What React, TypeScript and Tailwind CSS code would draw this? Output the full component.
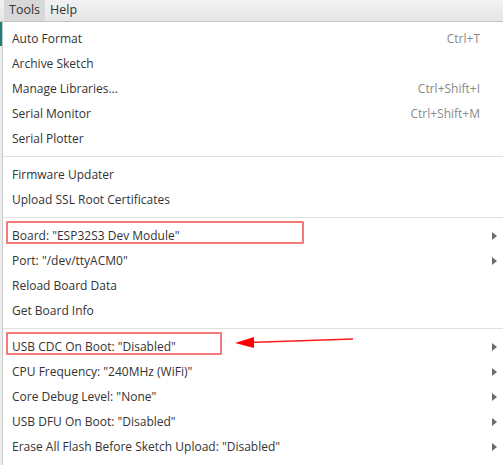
import React from 'react';

type Item = { label: string; shortcut?: string; sub?: boolean; box?: number };

const groups: Item[][] = [
  [
    { label: 'Auto Format', shortcut: 'Ctrl+T' },
    { label: 'Archive Sketch' },
    { label: 'Manage Libraries...', shortcut: 'Ctrl+Shift+I' },
    { label: 'Serial Monitor', shortcut: 'Ctrl+Shift+M' },
    { label: 'Serial Plotter' },
  ],
  [{ label: 'Firmware Updater' }, { label: 'Upload SSL Root Certificates' }],
  [
    { label: 'Board: "ESP32S3 Dev Module"', sub: true, box: 298 },
    { label: 'Port: "/dev/ttyACM0"', sub: true },
    { label: 'Reload Board Data' },
    { label: 'Get Board Info' },
  ],
  [
    { label: 'USB CDC On Boot: "Disabled"', sub: true, box: 216 },
    { label: 'CPU Frequency: "240MHz (WiFi)"', sub: true },
    { label: 'Core Debug Level: "None"', sub: true },
    { label: 'USB DFU On Boot: "Disabled"', sub: true },
    { label: 'Erase All Flash Before Sketch Upload: "Disabled"', sub: true },
  ],
];

const Row = ({ item }: { item: Item }) => (
  <div className="relative flex h-[25px] items-center pl-[9px] pr-[23px]">
    <span className="text-[#333333]">{item.label}</span>
    {item.shortcut && <span className="ml-auto text-[#8a8a8a]">{item.shortcut}</span>}
    {item.sub && (
      <svg className="absolute right-[6px] top-[9px]" width="5" height="8" viewBox="0 0 5 8">
        <path d="M0 0 L5 4 L0 8 Z" fill="#6b6b6b" />
      </svg>
    )}
    {item.box && (
      <div
        className="absolute left-[3px] top-[-2px] h-[23px] rounded-[1px] border-2 border-[#f27a7a]"
        style={{ width: item.box }}
      />
    )}
  </div>
);

export default function App() {
  return (
    <div
      className="relative h-[465px] w-[503px] overflow-hidden bg-white text-[12px]"
      style={{ fontFamily: '"Open Sans", "Noto Sans", sans-serif' }}
    >
      <div className="flex h-[22px] items-stretch border-b border-[#c4c4c4] bg-gradient-to-b from-[#f2f2f2] to-[#e6e6e6] text-[12.5px] text-[#333333]">
        <div className="ml-[4px] flex items-center bg-[#d8d8d8] px-[5px]">Tools</div>
        <div className="flex items-center px-[5px]">Help</div>
      </div>
      <div className="flex h-[443px]">
        <div className="w-[3px] border-r border-[#c8c8c8] bg-[#ececec]">
          <div className="h-[24px] bg-[#1b7f7a]" />
        </div>
        <div className="flex-1 pt-[4px]">
          {groups.map((g, i) => (
            <div key={i}>
              {i > 0 && <div className="my-[5px] h-px bg-[#e0e0e0]" />}
              {g.map((it) => (
                <Row key={it.label} item={it} />
              ))}
            </div>
          ))}
        </div>
      </div>
      <svg className="absolute left-[234px] top-[333px]" width="122" height="16" viewBox="0 0 122 16">
        <path d="M14 9.5 L119 6" stroke="#ff1a1a" strokeWidth="1.6" />
        <path d="M1 10 L20 4 L20 15 Z" fill="#ff0000" />
      </svg>
    </div>
  );
}
